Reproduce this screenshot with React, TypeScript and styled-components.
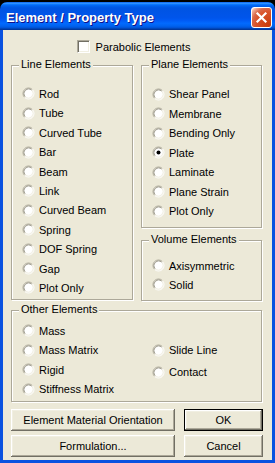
import React from 'react';
import styled, { createGlobalStyle } from 'styled-components';

const GlobalStyle = createGlobalStyle`
  *, *::before, *::after { box-sizing: border-box; }
  html, body { margin: 0; padding: 0; background: #000; }
  body {
    font-family: "Liberation Sans", Arial, sans-serif;
    font-size: 11px;
    color: #000;
  }
`;

const Window = styled.div`
  width: 275px;
  height: 461px;
  margin-top: 2px;
  display: flex;
  flex-direction: column;
`;

const TitleBar = styled.div`
  height: 28px;
  flex: none;
  display: flex;
  align-items: center;
  justify-content: space-between;
  padding: 0 3px 0 6px;
  border-radius: 7px 7px 0 0;
  background: linear-gradient(
    to bottom,
    #0058ee 0%, #3593ff 4%, #288eff 6%, #127dff 8%, #036ffc 10%,
    #0262ee 14%, #0057e5 20%, #0054e3 24%, #0055eb 56%, #005bf5 66%,
    #026afe 76%, #0062ef 86%, #0052d6 92%, #0040ab 96%, #003092 100%
  );
`;

const Title = styled.span`
  color: #fff;
  font-weight: bold;
  font-size: 13px;
  text-shadow: 1px 1px #0f1089;
  margin-top: 2px;
`;

const CloseButton = styled.div`
  width: 21px;
  height: 21px;
  margin-top: 3px;
  border: 1px solid #fff;
  border-radius: 3px;
  display: flex;
  align-items: center;
  justify-content: center;
  background: radial-gradient(
    circle at 90% 90%,
    #c83c0c 0%, #d9532a 55%, #d9694a 72%, #f3b59f 90%, #fff 100%
  );
`;

const Body = styled.div`
  flex: 1;
  display: flex;
  flex-direction: column;
  background: #ece9d8;
  border: 3px solid #0a52e0;
  border-top: 0;
  padding: 0 10px 0 8px;
`;

const CheckRow = styled.label`
  display: flex;
  align-items: center;
  justify-content: center;
  gap: 6px;
  height: 15px;
  margin-top: 9px;
  padding-right: 6px;
`;

const CheckBox = styled.span`
  width: 13px;
  height: 13px;
  background: #fff;
  border: 1px solid;
  border-color: #aca899 #fff #fff #aca899;
  box-shadow: inset 1px 1px #716f64, inset -1px -1px #f1efe2;
`;

const Columns = styled.div`
  display: grid;
  grid-template-columns: 122px 121px;
  column-gap: 8px;
  align-items: start;
  margin-top: 11px;
`;

const Stack = styled.div`
  display: flex;
  flex-direction: column;
  gap: 12px;
`;

const Group = styled.div<{ $h: number; $mt?: number }>`
  position: relative;
  height: ${p => p.$h}px;
  margin-top: ${p => p.$mt ?? 0}px;
  border: 1px solid #aca899;
  box-shadow: inset 1px 1px #fff, 1px 1px #fff;
  padding-left: 10px;
`;

const Legend = styled.span`
  position: absolute;
  top: -8px;
  left: 7px;
  padding: 0 2px;
  line-height: 13px;
  background: #ece9d8;
`;

const List = styled.div<{ $pt: number }>`
  display: flex;
  flex-direction: column;
  padding-top: ${p => p.$pt}px;
`;

const TwoCols = styled.div`
  display: grid;
  grid-template-columns: 130px 1fr;
`;

const Row = styled.div<{ $h: number }>`
  display: flex;
  align-items: center;
  gap: 4px;
  height: ${p => p.$h}px;
  white-space: nowrap;
`;

const Buttons = styled.div`
  display: grid;
  grid-template-columns: 164px 79px;
  grid-auto-rows: 22px;
  column-gap: 9px;
  row-gap: 4px;
  margin-top: 7px;
`;

const Button = styled.button<{ $default?: boolean }>`
  font: inherit;
  color: #000;
  padding: 0;
  background: #ece9d8;
  border: ${p => (p.$default ? '1px solid #000' : '0')};
  box-shadow: inset -1px -1px #716f64, inset 1px 1px #fff,
    inset -2px -2px #aca899, inset 2px 2px #f1efe2;
`;

const Radio = ({ checked }: { checked?: boolean }) => (
  <svg width={13} height={13} viewBox="0 0 13 13">
    <circle cx={6.5} cy={6.5} r={5} fill="#fff" />
    <path d="M2.61 10.39 A5.5 5.5 0 0 1 10.39 2.61" fill="none" stroke="#aca899" />
    <path d="M10.39 2.61 A5.5 5.5 0 0 1 2.61 10.39" fill="none" stroke="#fff" />
    <path d="M3.32 9.68 A4.5 4.5 0 0 1 9.68 3.32" fill="none" stroke="#9d9a8c" />
    <path d="M9.68 3.32 A4.5 4.5 0 0 1 3.32 9.68" fill="none" stroke="#f1efe2" />
    {checked && <circle cx={6.5} cy={6.5} r={2} fill="#000" />}
  </svg>
);

const Option = ({ label, h, checked }: { label: string; h: number; checked?: boolean }) => (
  <Row $h={h}>
    <Radio checked={checked} />
    <span>{label}</span>
  </Row>
);

const lineElements = ['Rod', 'Tube', 'Curved Tube', 'Bar', 'Beam', 'Link', 'Curved Beam', 'Spring', 'DOF Spring', 'Gap', 'Plot Only'];
const planeElements = ['Shear Panel', 'Membrane', 'Bending Only', 'Plate', 'Laminate', 'Plane Strain', 'Plot Only'];
const volumeElements = ['Axisymmetric', 'Solid'];
const otherLeft = ['Mass', 'Mass Matrix', 'Rigid', 'Stiffness Matrix'];
const otherRight = ['Slide Line', 'Contact'];

const ROW = 19.4;

export default function App() {
  return (
    <>
      <GlobalStyle />
      <Window>
        <TitleBar>
          <Title>Element / Property Type</Title>
          <CloseButton>
            <svg width={13} height={13} viewBox="0 0 13 13">
              <path d="M2.5 2.5 L10.5 10.5 M10.5 2.5 L2.5 10.5" stroke="#fff" strokeWidth={2.2} strokeLinecap="square" />
            </svg>
          </CloseButton>
        </TitleBar>
        <Body>
          <CheckRow>
            <CheckBox />
            <span>Parabolic Elements</span>
          </CheckRow>

          <Columns>
            <Group $h={235}>
              <Legend>Line Elements</Legend>
              <List $pt={18.3}>
                {lineElements.map(l => <Option key={l} label={l} h={ROW} />)}
              </List>
            </Group>
            <Stack>
              <Group $h={163}>
                <Legend>Plane Elements</Legend>
                <List $pt={18.3}>
                  {planeElements.map(l => <Option key={l} label={l} h={19.5} checked={l === 'Plate'} />)}
                </List>
              </Group>
              <Group $h={61}>
                <Legend>Volume Elements</Legend>
                <List $pt={15.3}>
                  {volumeElements.map(l => <Option key={l} label={l} h={19} />)}
                </List>
              </Group>
            </Stack>
          </Columns>

          <Group $h={92} $mt={9}>
            <Legend>Other Elements</Legend>
            <TwoCols>
              <List $pt={10.3}>
                {otherLeft.map(l => <Option key={l} label={l} h={ROW} />)}
              </List>
              <List $pt={28}>
                {otherRight.map(l => <Option key={l} label={l} h={22} />)}
              </List>
            </TwoCols>
          </Group>

          <Buttons>
            <Button>Element Material Orientation</Button>
            <Button $default>OK</Button>
            <Button>Formulation...</Button>
            <Button>Cancel</Button>
          </Buttons>
        </Body>
      </Window>
    </>
  );
}
